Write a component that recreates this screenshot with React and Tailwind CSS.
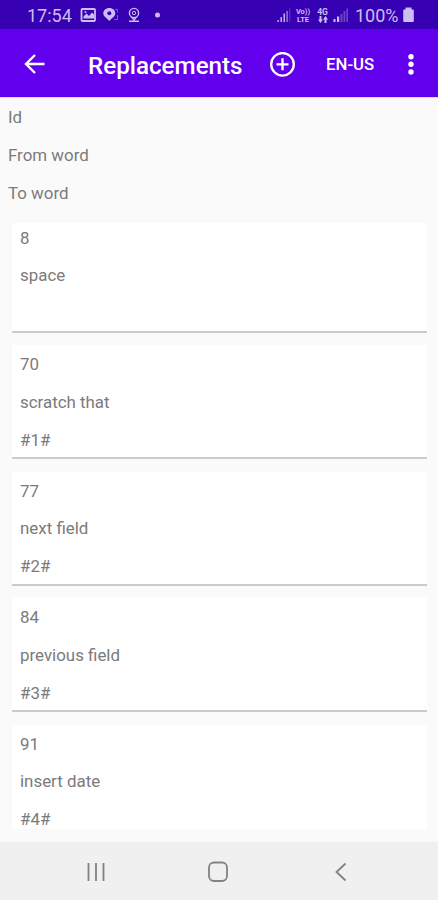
import React from 'react';

const headings = ['Id', 'From word', 'To word'];

const replacements = [
  { id: 8, from: 'space', to: '' },
  { id: 70, from: 'scratch that', to: '#1#' },
  { id: 77, from: 'next field', to: '#2#' },
  { id: 84, from: 'previous field', to: '#3#' },
  { id: 91, from: 'insert date', to: '#4#' },
];

const StatusBar = () => (
  <div className="flex h-[29px] shrink-0 items-center bg-[#3700b3] pl-[27px] pr-[24px] text-[#cdbdf0]">
    <span className="w-[53px] pt-0.5 text-[18px] leading-none whitespace-nowrap">17:54</span>
    <svg className="h-[29px] w-[84px]" viewBox="80 0 84 29" fill="none">
      {/* picture */}
      <rect x="81.5" y="9" width="13.5" height="12" rx="1" stroke="currentColor" strokeWidth="1.8" />
      <path d="M83.5 18.5v-2l3-3 2.5 2.5 3-3.5 2 2v4z" fill="currentColor" />
      <circle cx="85.5" cy="12" r="1" fill="currentColor" />
      {/* map pin */}
      <path d="M109.3 8c-3.6 0-6 2.400-6 5.600 0 2.600 2.800 4.200 6 7.400 3.200-3.200 6-4.800 6-7.400C115.3 10.400 112.900 8 109.300 8z" fill="currentColor" />
      <circle cx="109.3" cy="13.2" r="2" fill="#3700b3" />
      <path d="M115 9.5h2.500v3M117.5 15v4.500H114" stroke="currentColor" strokeOpacity=".45" />
      {/* location */}
      <circle cx="134" cy="13" r="4.600" stroke="currentColor" strokeWidth="1.4" />
      <circle cx="134" cy="13" r="1.700" stroke="currentColor" />
      <path d="M131.5 17l2.500 3 2.500-3M129 21.300h10" stroke="currentColor" strokeWidth="1.4" />
      <circle cx="157.5" cy="15" r="2.500" fill="currentColor" />
    </svg>
    <div className="ml-auto flex items-center">
      <svg className="h-[29px] w-[14px]" viewBox="276 0 14 29" fill="currentColor">
        <path d="M276.5 20h1.300v2h-1.300zM279.5 17h1.400v5h-1.400zM282.5 13.500h1.400v8.500h-1.400z" />
        <path d="M285.5 11h1.200v11h-1.200z" opacity=".8" />
        <path d="M288.3 8.500h1v13.500h-1z" opacity=".3" />
      </svg>
      <div className="ml-[3px] flex w-[18px] flex-col items-center pt-0.5 text-[7.500px] leading-[8px] font-bold whitespace-nowrap">
        <span>Vo))</span>
        <span>LTE</span>
      </div>
      <div className="ml-[4px] flex w-[13px] flex-col items-center pt-0.5 text-[8.500px] leading-[8px] font-bold">
        <span>4G</span>
        <svg className="h-[7px] w-[10px]" viewBox="0 0 10 7" fill="currentColor">
          <path d="M1.500 0h2v3.500H5L2.500 7 0 3.500h1.500zM6.500 7h2V3.500H10L7.500 0 5 3.500h1.500z" />
        </svg>
      </div>
      <svg className="ml-[4px] h-[29px] w-[15px]" viewBox="332 0 15 29" fill="currentColor">
        <path d="M332.5 19h2v3h-2zM336 16.500h2.200V22H336z" />
        <path d="M339.500 14h2v8h-2zM342.500 11h1.800v11h-1.800zM345.300 8.500h1.700V22h-1.700z" opacity=".35" />
      </svg>
      <span className="ml-[7px] w-[45px] pt-0.5 text-[18px] leading-none whitespace-nowrap">100%</span>
      <svg className="ml-[3px] h-[29px] w-[11px]" viewBox="403 0 11 29" fill="currentColor">
        <path d="M405.500 7.500h6v2h1.300q1 0 1 1v10.500q0 1-1 1h-8.600q-1 0-1-1V10.500q0-1 1-1h1.300z" />
      </svg>
    </div>
  </div>
);

const AppBar = () => (
  <header className="flex h-[68px] shrink-0 items-center bg-[#6200ee] pt-[3px] text-white">
    <button className="ml-[24px] w-[64px]" aria-label="Back">
      <svg width="22" height="22" viewBox="0 0 22 22" fill="none" stroke="currentColor" strokeWidth="2.400">
        <path d="M20.500 10H3M11 1l-9 9 9 9" />
      </svg>
    </button>
    <h1 className="w-[181px] pt-[3px] text-[24.200px] leading-none font-medium whitespace-nowrap">Replacements</h1>
    <button aria-label="Add">
      <svg width="26" height="26" viewBox="0 0 26 26" fill="none" stroke="currentColor" strokeWidth="2.300">
        <circle cx="13.500" cy="12.300" r="11.300" />
        <path d="M13.500 6.300v12M7.500 12.300h12" />
      </svg>
    </button>
    <button className="ml-[31px] w-[50px] text-left text-[16.800px] leading-none font-medium whitespace-nowrap">EN-US</button>
    <button className="ml-[31px]" aria-label="More">
      <svg width="8" height="22" viewBox="0 0 8 22" fill="currentColor">
        <circle cx="4" cy="2.700" r="2.700" />
        <circle cx="4" cy="10.300" r="2.700" />
        <circle cx="4" cy="18" r="2.700" />
      </svg>
    </button>
  </header>
);

const ReplacementCard = ({ item }) => (
  <div className="h-[114px] shrink-0 border-b-2 border-[#cbcbcb] bg-white px-2 pt-px">
    <p className="h-[37.750px] leading-[37.750px]">{item.id}</p>
    <p className="h-[37.750px] leading-[37.750px]">{item.from}</p>
    <p className="h-[37.750px] leading-[37.750px]">{item.to}</p>
  </div>
);

const NavigationBar = () => (
  <nav className="flex h-[58px] shrink-0 items-center bg-[#f0f0f0] pt-0.5 text-[#828282]">
    <svg className="ml-[86px]" width="20" height="20" viewBox="0 0 20 20" fill="none" stroke="currentColor" strokeWidth="1.800">
      <path d="M2.500 1v18M10 1v18M17.500 1v18" />
    </svg>
    <svg className="ml-[101px]" width="22" height="22" viewBox="0 0 22 22" fill="none" stroke="currentColor" strokeWidth="1.800">
      <rect x="2" y="1.500" width="18" height="18.500" rx="5" />
    </svg>
    <svg className="ml-[105px]" width="14" height="20" viewBox="0 0 14 20" fill="none" stroke="currentColor" strokeWidth="1.800">
      <path d="M11.500 1.500L2.500 10l9 8.500" />
    </svg>
  </nav>
);

const App = () => {
  return (
    <div className="flex h-[900px] w-[438px] flex-col overflow-hidden bg-[#fafafa] font-['Roboto',sans-serif] text-[16.900px] text-[#7b7b7b]">
      <StatusBar />
      <AppBar />
      <div className="h-[126px] shrink-0 border-t border-[#e3d5f8] px-2">
        {headings.map((heading) => (
          <p key={heading} className="h-[37.750px] leading-[39px]">{heading}</p>
        ))}
      </div>
      <main className="mr-[11px] ml-[12px] h-[606px] shrink-0 overflow-hidden bg-[#fafafa]">
        <div className="-mt-[4.500px] flex flex-col gap-[12.500px]">
          {replacements.map((item) => (
            <ReplacementCard key={item.id} item={item} />
          ))}
        </div>
      </main>
      <div className="flex-1" />
      <NavigationBar />
    </div>
  );
};

export default App;
